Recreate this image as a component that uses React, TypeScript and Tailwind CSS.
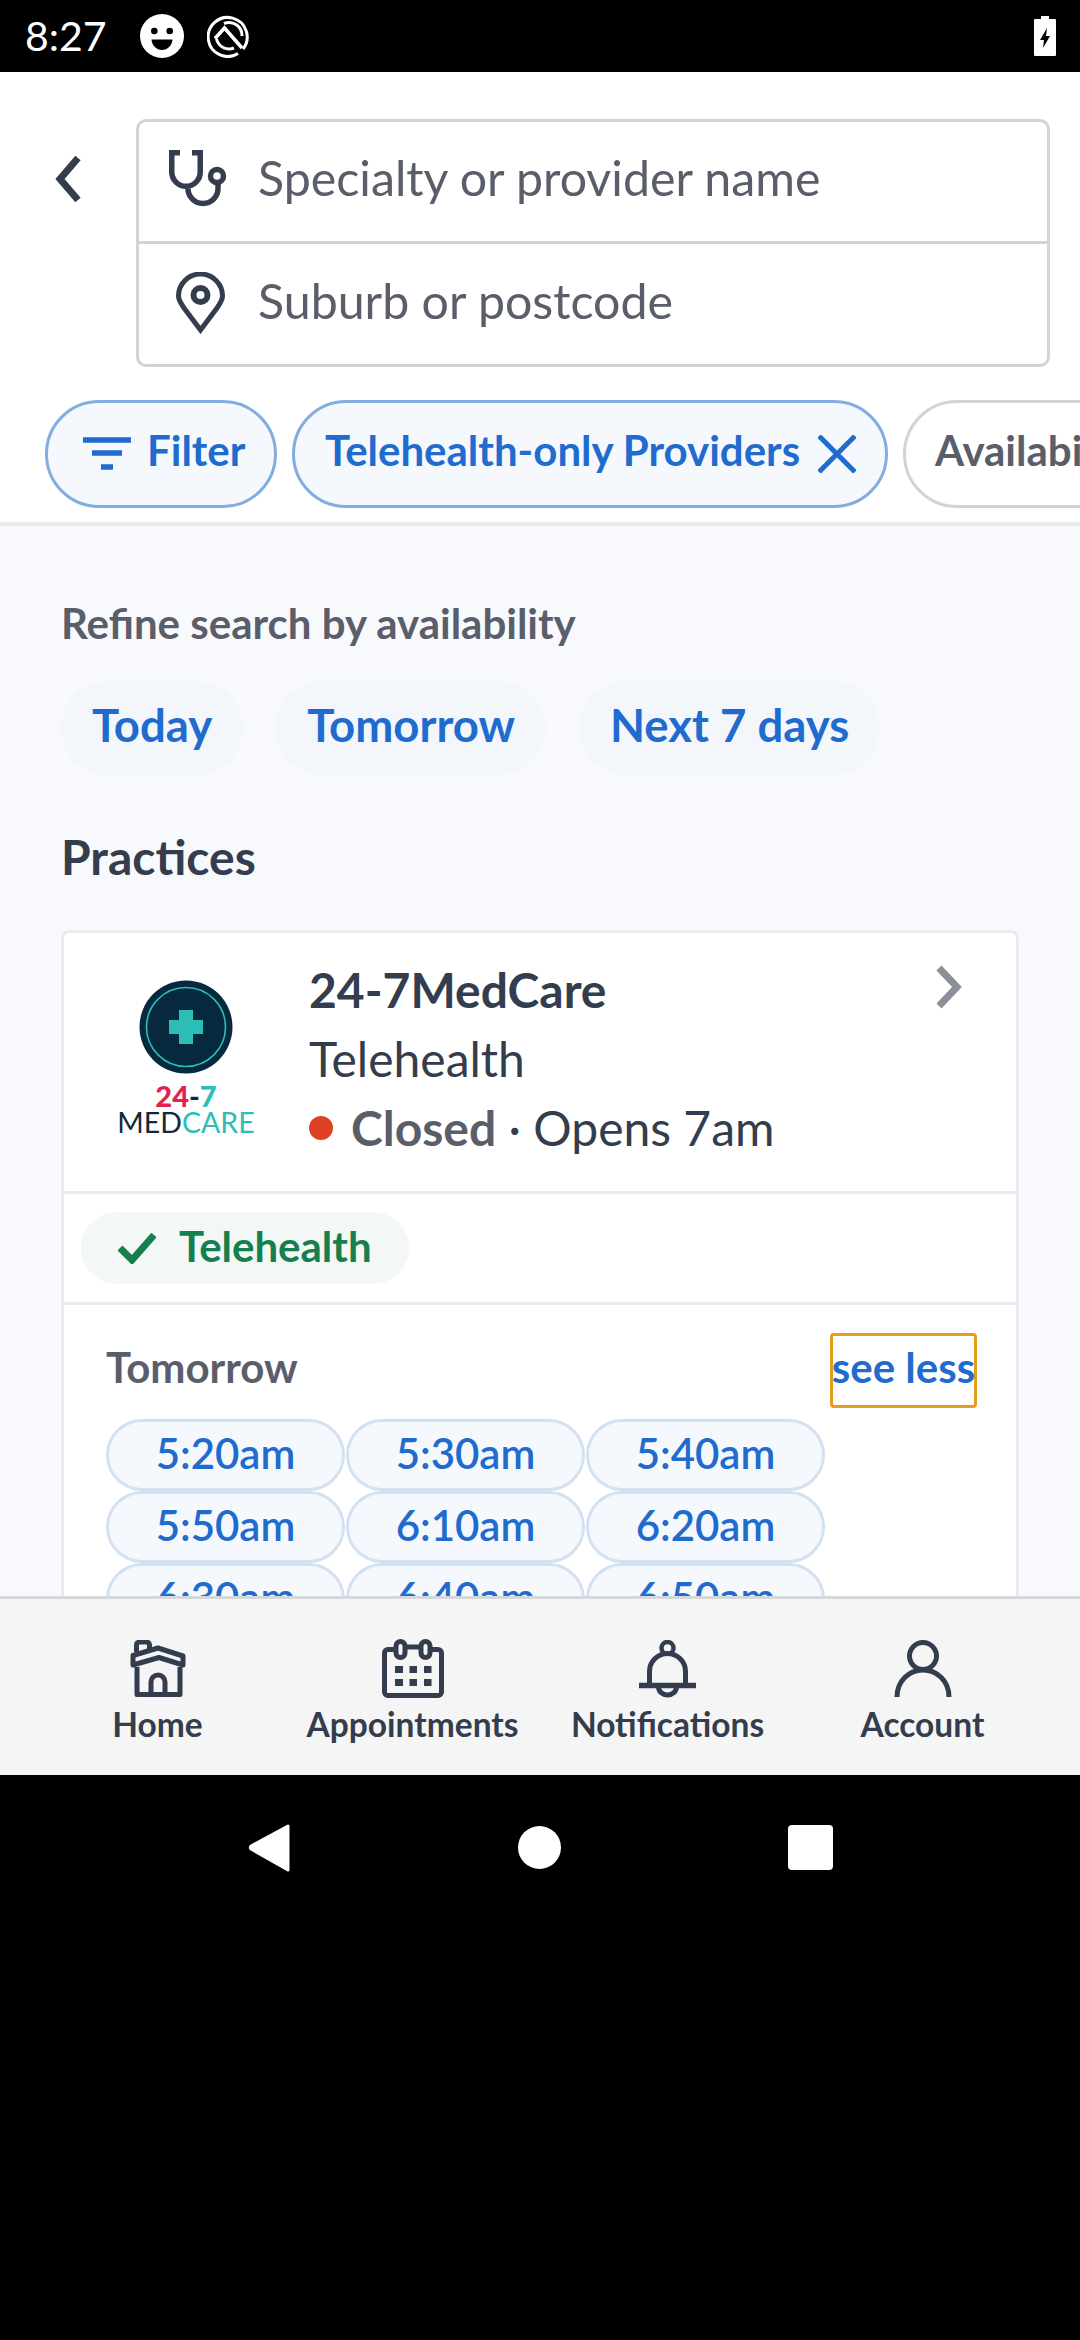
import React from "react";

const Face = () => (
  <svg width="46" height="46" viewBox="0 0 46 46">
    <circle cx="23" cy="23" r="22" fill="#fff" />
    <circle cx="15.3" cy="18" r="3.3" fill="#000" />
    <circle cx="30.7" cy="18" r="3.3" fill="#000" />
    <path d="M12.5 26.5h21c-.5 6-5 10.5-10.5 10.5s-10-4.500-10.500-10.500z" fill="#000" />
  </svg>
);
const QIcon = () => (
  <svg width="44" height="44" viewBox="0 0 44 44" fill="none" stroke="#fff" strokeWidth="3">
    <path d="M36 35A19.500 19.500 0 1 0 31 39.500" />
    <path d="M9.500 25A13 13 0 0 0 27 34" />
    <path d="M8 24.500L17.500 14L35 34" strokeWidth="3.500" />
    <path d="M17 9.500A13 13 0 0 1 35 22" />
  </svg>
);
const Battery = () => (
  <svg width="22" height="40" viewBox="0 0 22 40">
    <path d="M7 0h8v3h6a1 1 0 0 1 1 1v35a1 1 0 0 1-1 1H1a1 1 0 0 1-1-1V4a1 1 0 0 1 1-1h6z" fill="#fff" />
    <path d="M13 12l-7 12h4l-1 8 7-12h-4z" fill="#000" />
  </svg>
);
const Stethoscope = () => (
  <svg width="58" height="58" viewBox="0 0 58 58" fill="none" stroke="#333d4d" strokeWidth="5.500">
    <path d="M11 2.750H2.750V22a14.250 14.250 0 0 0 28.500 0V2.750H23" />
    <path d="M19 38.500a15 15 0 0 0 30 0V33" />
    <circle cx="48" cy="26" r="6.500" />
  </svg>
);
const Pin = () => (
  <svg width="49" height="62" viewBox="0 0 49 62" fill="none" stroke="#333d4d" strokeWidth="5">
    <path d="M24.500 58L8 36C4.500 31 2.500 28 2.500 24a22 22 0 0 1 44 0c0 4-2 7-5.500 12z" />
    <circle cx="24.500" cy="23" r="7" strokeWidth="6" />
  </svg>
);
const FilterIcon = () => (
  <svg width="48" height="34" viewBox="0 0 48 34" stroke="#1f6bce" strokeWidth="5.500">
    <path d="M0 3h48M9 16h30M18 30h12" />
  </svg>
);
const Logo = () => (
  <div className="flex flex-col items-center w-[150px] ml-[47px]">
    <svg width="94" height="94" viewBox="0 0 94 94">
      <circle cx="47" cy="47" r="46.500" fill="#06293d" />
      <circle cx="47" cy="47" r="39.500" fill="none" stroke="#2bbdb6" strokeWidth="1.600" />
      <path d="M40 30h14v10h10v14H54v10H40V54H30V40h10z" fill="#2bbdb6" />
    </svg>
    <div className="mt-[9px] h-[26px] leading-[26px] text-[29px] font-black">
      <span className="text-[#e0234e]">24</span>
      <span className="text-[#12293a]">-</span>
      <span className="text-[#2bbdb6]">7</span>
    </div>
    <div className="h-[26px] leading-[26px] text-[28.5px] whitespace-nowrap">
      <span className="text-[#12293a]">MED</span>
      <span className="text-[#2bbdb6]">CARE</span>
    </div>
  </div>
);

const HomeIcon = () => (
  <svg width="58" height="58" viewBox="0 0 58 58" fill="none" stroke="#333d4d" strokeWidth="5" strokeLinejoin="round">
    <path d="M7.500 12V5a3 3 0 0 1 3-3h7a3 3 0 0 1 3 3v4" />
    <path d="M4 15.500L29 8l25 8v9L30 17.500 4 25z" />
    <path d="M8 27v27.500h43V27" />
    <path d="M22 54V42a7 7 0 0 1 14 0v12" />
  </svg>
);
const CalIcon = () => (
  <svg width="62" height="60" viewBox="0 0 62 60" fill="none" stroke="#333d4d" strokeWidth="5">
    <path d="M12 10.500H6a3.500 3.500 0 0 0-3.500 3.500v39a3.500 3.500 0 0 0 3.500 3.500h50a3.500 3.500 0 0 0 3.500-3.500V14a3.500 3.500 0 0 0-3.500-3.500h-6M25 8h12" />
    <rect x="14" y="2.500" width="9" height="16" rx="4.500" />
    <rect x="39" y="2.500" width="9" height="16" rx="4.500" />
    <g fill="#333d4d" stroke="none">
      <rect x="13" y="27" width="8" height="7" /><rect x="27.500" y="27" width="7.500" height="7" /><rect x="42" y="27" width="7.500" height="7" />
      <rect x="13" y="40" width="8" height="7" /><rect x="27.500" y="40" width="7.500" height="7" /><rect x="42" y="40" width="7.500" height="7" />
    </g>
  </svg>
);
const BellIcon = () => (
  <svg width="58" height="58" viewBox="0 0 58 58" fill="none" stroke="#333d4d" strokeWidth="4.500">
    <circle cx="28.500" cy="8" r="6" />
    <path d="M10.500 45V31.500a18 18 0 0 1 36 0V45" strokeWidth="5" />
    <path d="M0 45.500h57" strokeWidth="5.500" />
    <path d="M19.500 47a9 8 0 0 0 18 0" strokeWidth="5" />
  </svg>
);
const UserIcon = () => (
  <svg width="58" height="58" viewBox="0 0 58 58" fill="none" stroke="#333d4d" strokeWidth="5">
    <circle cx="29" cy="16" r="13.500" />
    <path d="M3 57C3 41 15 30 29 30s26 11 26 27" />
  </svg>
);

const chip = "h-[72px] w-[239px] shrink-0 rounded-[36px] border-[3px] border-[#d3e1f2] bg-[#f5f8fc] text-[#1f6bce] text-[42px] font-semibold pb-[3px] flex items-center justify-center";
const times = ["5:20am", "5:30am", "5:40am", "5:50am", "6:10am", "6:20am", "6:30am", "6:40am", "6:50am"];
const dayChip = "h-[94px] rounded-[47px] bg-[#f3f6fa] px-[31px] pb-[5px] flex items-center text-[#1f6bce] text-[45.500px] font-bold";

const NavItem = ({ icon, label }: { icon: React.ReactNode; label: string }) => (
  <div className="flex flex-col items-center">
    <div className="h-[60px] flex items-center">{icon}</div>
    <div className="text-[33.500px] leading-[44px] mt-[3px] font-bold text-[#333d4d] whitespace-nowrap">{label}</div>
  </div>
);

export default function App() {
  return (
    <div className="w-[1080px] h-[2340px] bg-black overflow-hidden flex flex-col font-['Lato','Liberation_Sans',sans-serif]">
      <div className="h-[72px] shrink-0 flex items-center pl-[25px] pr-[24px] text-white">
        <div className="text-[41px] w-[114px]">8:27</div>
        <div className="mr-[22px]"><Face /></div>
        <QIcon />
        <div className="ml-auto"><Battery /></div>
      </div>

      <div className="h-[1703px] shrink-0 flex flex-col bg-white overflow-hidden">
        <div className="shrink-0 bg-white border-b-[4px] border-[#e9ebf0] h-[454px]">
          <div className="flex items-start pt-[47px]">
            <div className="w-[136px] shrink-0 pl-[55px] pt-[36px]">
              <svg width="26" height="48" viewBox="0 0 26 48" fill="none" stroke="#333d4d" strokeWidth="7">
                <path d="M23 3L5 24l18 21" />
              </svg>
            </div>
            <div className="w-[914px] h-[248px] rounded-[10px] border-[3px] border-[#d3d3d3] flex flex-col">
              <div className="h-[122px] border-b-[3px] border-[#d3d3d3] flex items-center pl-[30px] pb-[8px]">
                <div className="w-[89px] shrink-0 h-[58px] pt-[1px]"><Stethoscope /></div>
                <span className="text-[48.300px] text-[#5a5e6b]">Specialty or provider name</span>
              </div>
              <div className="flex-1 flex items-center pl-[37px] pb-[8px]">
                <div className="w-[82px] shrink-0 h-[62px] pt-[3px]"><Pin /></div>
                <span className="text-[48.300px] text-[#5a5e6b]">Suburb or postcode</span>
              </div>
            </div>
          </div>
          <div className="flex items-center gap-[15px] pl-[45px] mt-[33px] overflow-hidden">
            <div className="h-[108px] w-[232px] shrink-0 rounded-[54px] border-[3px] border-[#83ace0] bg-[#f5f8fc] flex items-center pl-[35px]">
              <FilterIcon />
              <span className="ml-[16px] pb-[8px] text-[42px] font-bold text-[#1f6bce]">Filter</span>
            </div>
            <div className="h-[108px] w-[596px] shrink-0 rounded-[54px] border-[3px] border-[#83ace0] bg-[#f5f8fc] flex items-center pl-[30px]">
              <span className="pb-[8px] text-[42px] font-bold text-[#1f6bce] whitespace-nowrap">Telehealth-only Providers</span>
              <svg className="ml-[18px]" width="38" height="38" viewBox="0 0 38 38" stroke="#1f6bce" strokeWidth="5"><path d="M1 1l36 36M37 1L1 37" /></svg>
            </div>
            <div className="h-[108px] w-[300px] shrink-0 rounded-[54px] border-[3px] border-[#d3d3d3] bg-white flex items-center pl-[29px]">
              <span className="pb-[8px] text-[42px] font-bold text-[#5a5e6b] whitespace-nowrap">Availability</span>
            </div>
          </div>
        </div>

        <div className="flex-1 min-h-0 overflow-hidden bg-[#f7f9fc] pl-[61px] pr-[61px] pt-[75px]">
          <div className="text-[42px] leading-[44px] font-bold text-[#5a5e6b]">Refine search by availability</div>
          <div className="flex gap-[33px] mt-[36px]">
            <div className={dayChip}>Today</div>
            <div className={dayChip}>Tomorrow</div>
            <div className={dayChip}>Next 7 days</div>
          </div>
          <div className="mt-[54px] text-[48px] leading-[56px] font-bold text-[#333d4d]">Practices</div>
          <div className="mt-[45px] rounded-[8px] border-[3px] border-[#e9ebf0] bg-white">
            <div className="h-[261px] border-b-[3px] border-[#e9ebf0] flex pt-[47px] relative">
              <Logo />
              <div className="ml-[48px] -mt-[25px]">
                <div className="text-[48px] leading-[69px] font-bold text-[#333d4d]">24-7MedCare</div>
                <div className="text-[48px] leading-[69px] text-[#333d4d]">Telehealth</div>
                <div className="text-[48px] leading-[69px] flex items-center text-[#333d4d]">
                  <span className="w-[24px] h-[24px] rounded-full bg-[#dd4124] mr-[18px]" />
                  <span className="font-bold text-[#5a5e6b]">Closed</span>
                  <span className="whitespace-pre"> · Opens 7am</span>
                </div>
              </div>
              <svg className="absolute left-[872px] top-[32px]" width="26" height="44" viewBox="0 0 26 44" fill="none" stroke="#8b8f99" strokeWidth="7"><path d="M3 3l18 19L3 41" /></svg>
            </div>
            <div className="h-[111px] border-b-[3px] border-[#e9ebf0] flex items-center pl-[17px]">
              <div className="h-[72px] w-[328px] rounded-[36px] bg-[#f3f8f6] flex items-center pl-[37px]">
                <svg width="38" height="32" viewBox="0 0 38 32" fill="none" stroke="#157f4d" strokeWidth="7"><path d="M2 16l12 12L36 3" /></svg>
                <span className="ml-[23px] pb-[4px] text-[42px] font-bold text-[#157f4d]">Telehealth</span>
              </div>
            </div>
            <div className="pl-[42px] pt-[27px]">
              <div className="flex items-center justify-between pr-[39px] h-[76px]">
                <div className="text-[42px] font-bold text-[#5a5e6b] -mt-[6px]">Tomorrow</div>
                <div className="w-[147px] h-[75px] rounded-[4px] border-[3px] border-[#e59c1f] text-[42px] font-bold text-[#1f6bce] leading-[63px] flex justify-center whitespace-nowrap">see less</div>
              </div>
              <div className="grid grid-cols-[239px_239px_239px] gap-x-[1px] mt-[11px]">
                {times.map((t) => (
                  <div key={t} className={chip}>{t}</div>
                ))}
              </div>
            </div>
          </div>
        </div>

        <div className="h-[179px] shrink-0 bg-[#f5f5f5] border-t-[3px] border-[#d6d7d9] grid grid-cols-4 px-[30px] pt-[40px]">
          <NavItem icon={<HomeIcon />} label="Home" />
          <NavItem icon={<CalIcon />} label="Appointments" />
          <NavItem icon={<BellIcon />} label="Notifications" />
          <NavItem icon={<UserIcon />} label="Account" />
        </div>
      </div>

      <div className="h-[145px] shrink-0 flex items-center justify-center gap-[197px]">
        <svg width="44" height="50" viewBox="0 0 44 50"><path d="M41 3v44L4 26a2 2 0 0 1 0-3z" fill="#fff" stroke="#fff" strokeWidth="3" strokeLinejoin="round" /></svg>
        <div className="w-[43px] h-[43px] rounded-full bg-white mx-[30px]" />
        <div className="w-[45px] h-[45px] rounded-[4px] bg-white" />
      </div>
      <div className="flex-1" />
    </div>
  );
}
